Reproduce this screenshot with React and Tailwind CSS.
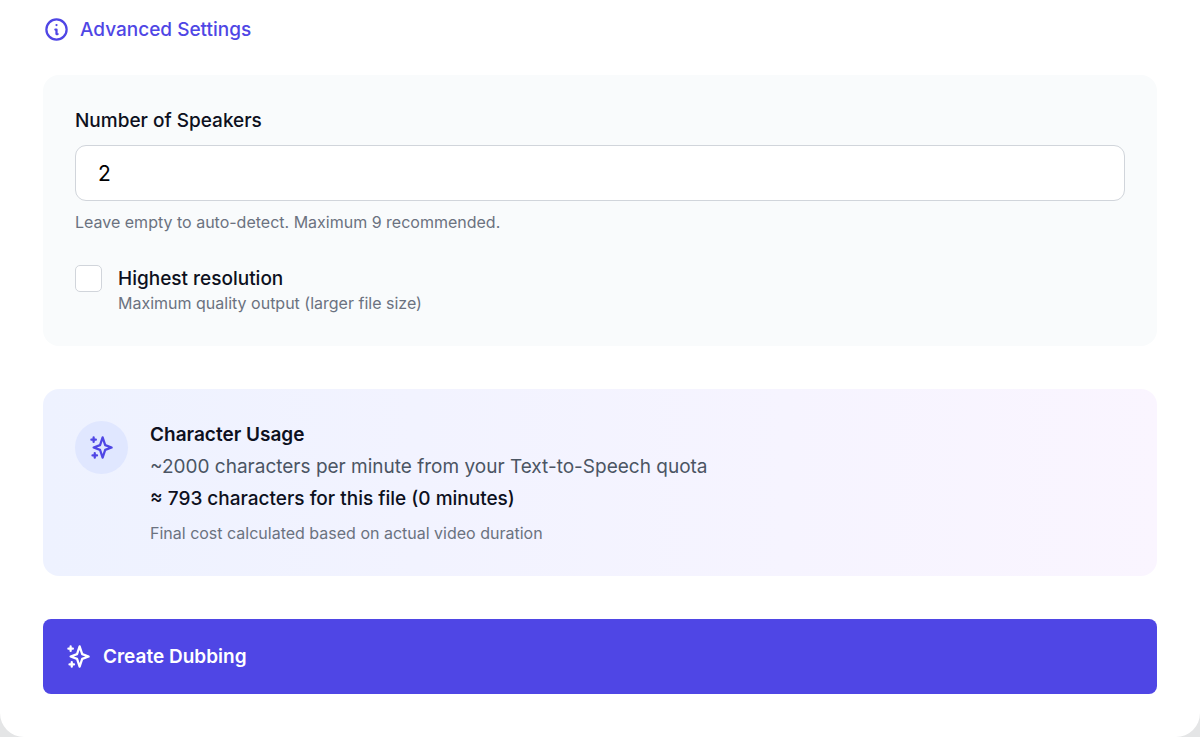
import React, { useState } from 'react';

function InfoIcon({ className }) {
    return (
        <svg className={className} fill="none" stroke="currentColor" viewBox="0 0 24 24" aria-hidden="true">
            <path
                strokeLinecap="round"
                strokeLinejoin="round"
                strokeWidth={2}
                d="M13 16h-1v-4h-1m1-4h.01M21 12a9 9 0 11-18 0 9 9 0 0118 0z"
            />
        </svg>
    );
}

function SparklesIcon({ className }) {
    return (
        <svg className={className} fill="none" stroke="currentColor" viewBox="0 0 24 24" aria-hidden="true">
            <path
                strokeLinecap="round"
                strokeLinejoin="round"
                strokeWidth={2}
                d="M5 3v4M3 5h4M6 17v4m-2-2h4m5-16l2.286 6.857L21 12l-5.714 2.143L13 21l-2.286-6.857L5 12l5.714-2.143L13 3z"
            />
        </svg>
    );
}

function App() {
    const [speakers, setSpeakers] = useState('2');
    const [highestResolution, setHighestResolution] = useState(false);

    return (
        <div className="bg-[#e4e5e6] font-['Inter',sans-serif]">
            <form
                onSubmit={(e) => e.preventDefault()}
                className="flex flex-col rounded-b-3xl bg-white px-[43px] pt-4 pb-[43px]"
            >
                <button type="button" className="flex items-center gap-[10px] self-start text-[19px] leading-[27px] font-medium text-[#4f46e5]">
                    <InfoIcon className="size-[27px]" />
                    Advanced Settings
                </button>

                {/* Settings panel */}
                <div className="mt-8 rounded-2xl bg-[#f9fbfc] p-8">
                    <label htmlFor="speakers" className="block text-[19px] leading-[28px] font-medium text-[#0d1020]">
                        Number of Speakers
                    </label>
                    <input
                        id="speakers"
                        type="text"
                        inputMode="numeric"
                        value={speakers}
                        onChange={(e) => setSpeakers(e.target.value)}
                        className="mt-[10px] block h-14 w-full rounded-[11px] border border-[#d1d5db] bg-white px-[22px] text-[21px] text-black"
                    />
                    <p className="mt-[11px] text-base leading-[21px] text-[#6b7280]">
                        Leave empty to auto-detect. Maximum 9 recommended.
                    </p>

                    <div className="mt-8 flex items-start gap-4">
                        <input
                            id="resolution"
                            type="checkbox"
                            checked={highestResolution}
                            onChange={(e) => setHighestResolution(e.target.checked)}
                            className="size-[27px] appearance-none rounded-[5px] border border-[#d1d5db] bg-white checked:border-[#4f46e5] checked:bg-[#4f46e5]"
                        />
                        <label htmlFor="resolution">
                            <span className="block text-[19px] leading-[28px] font-medium text-[#0d1020]">Highest resolution</span>
                            <span className="block text-base leading-[21px] text-[#6b7280]">Maximum quality output (larger file size)</span>
                        </label>
                    </div>
                </div>

                {/* Quota usage */}
                <div className="mt-[43px] flex items-start gap-[22px] rounded-2xl bg-linear-to-r from-[#eef2ff] to-[#faf5ff] p-8">
                    <div className="flex size-[53px] shrink-0 items-center justify-center rounded-full bg-[#e0e7ff] text-[#4f46e5]">
                        <SparklesIcon className="size-[27px]" />
                    </div>
                    <div>
                        <h3 className="text-[19px] leading-[27px] font-semibold text-[#0d1020]">Character Usage</h3>
                        <p className="mt-[5px] text-[19px] leading-[27px] text-[#4b5563]">
                            ~2000 characters per minute from your Text-to-Speech quota
                        </p>
                        <p className="mt-[5px] text-[19px] leading-[27px] font-medium text-[#0d1020]">
                            ≈ 793 characters for this file (0 minutes)
                        </p>
                        <p className="mt-[11px] text-base leading-[21px] text-[#6b7280]">
                            Final cost calculated based on actual video duration
                        </p>
                    </div>
                </div>

                <button
                    type="submit"
                    className="mt-[43px] flex h-[75px] items-center gap-[11px] rounded-lg bg-[#4f46e5] px-[22px] text-[19px] leading-[28px] font-semibold text-white"
                >
                    <SparklesIcon className="size-[27px]" />
                    Create Dubbing
                </button>
            </form>
        </div>
    );
}

export default App;
